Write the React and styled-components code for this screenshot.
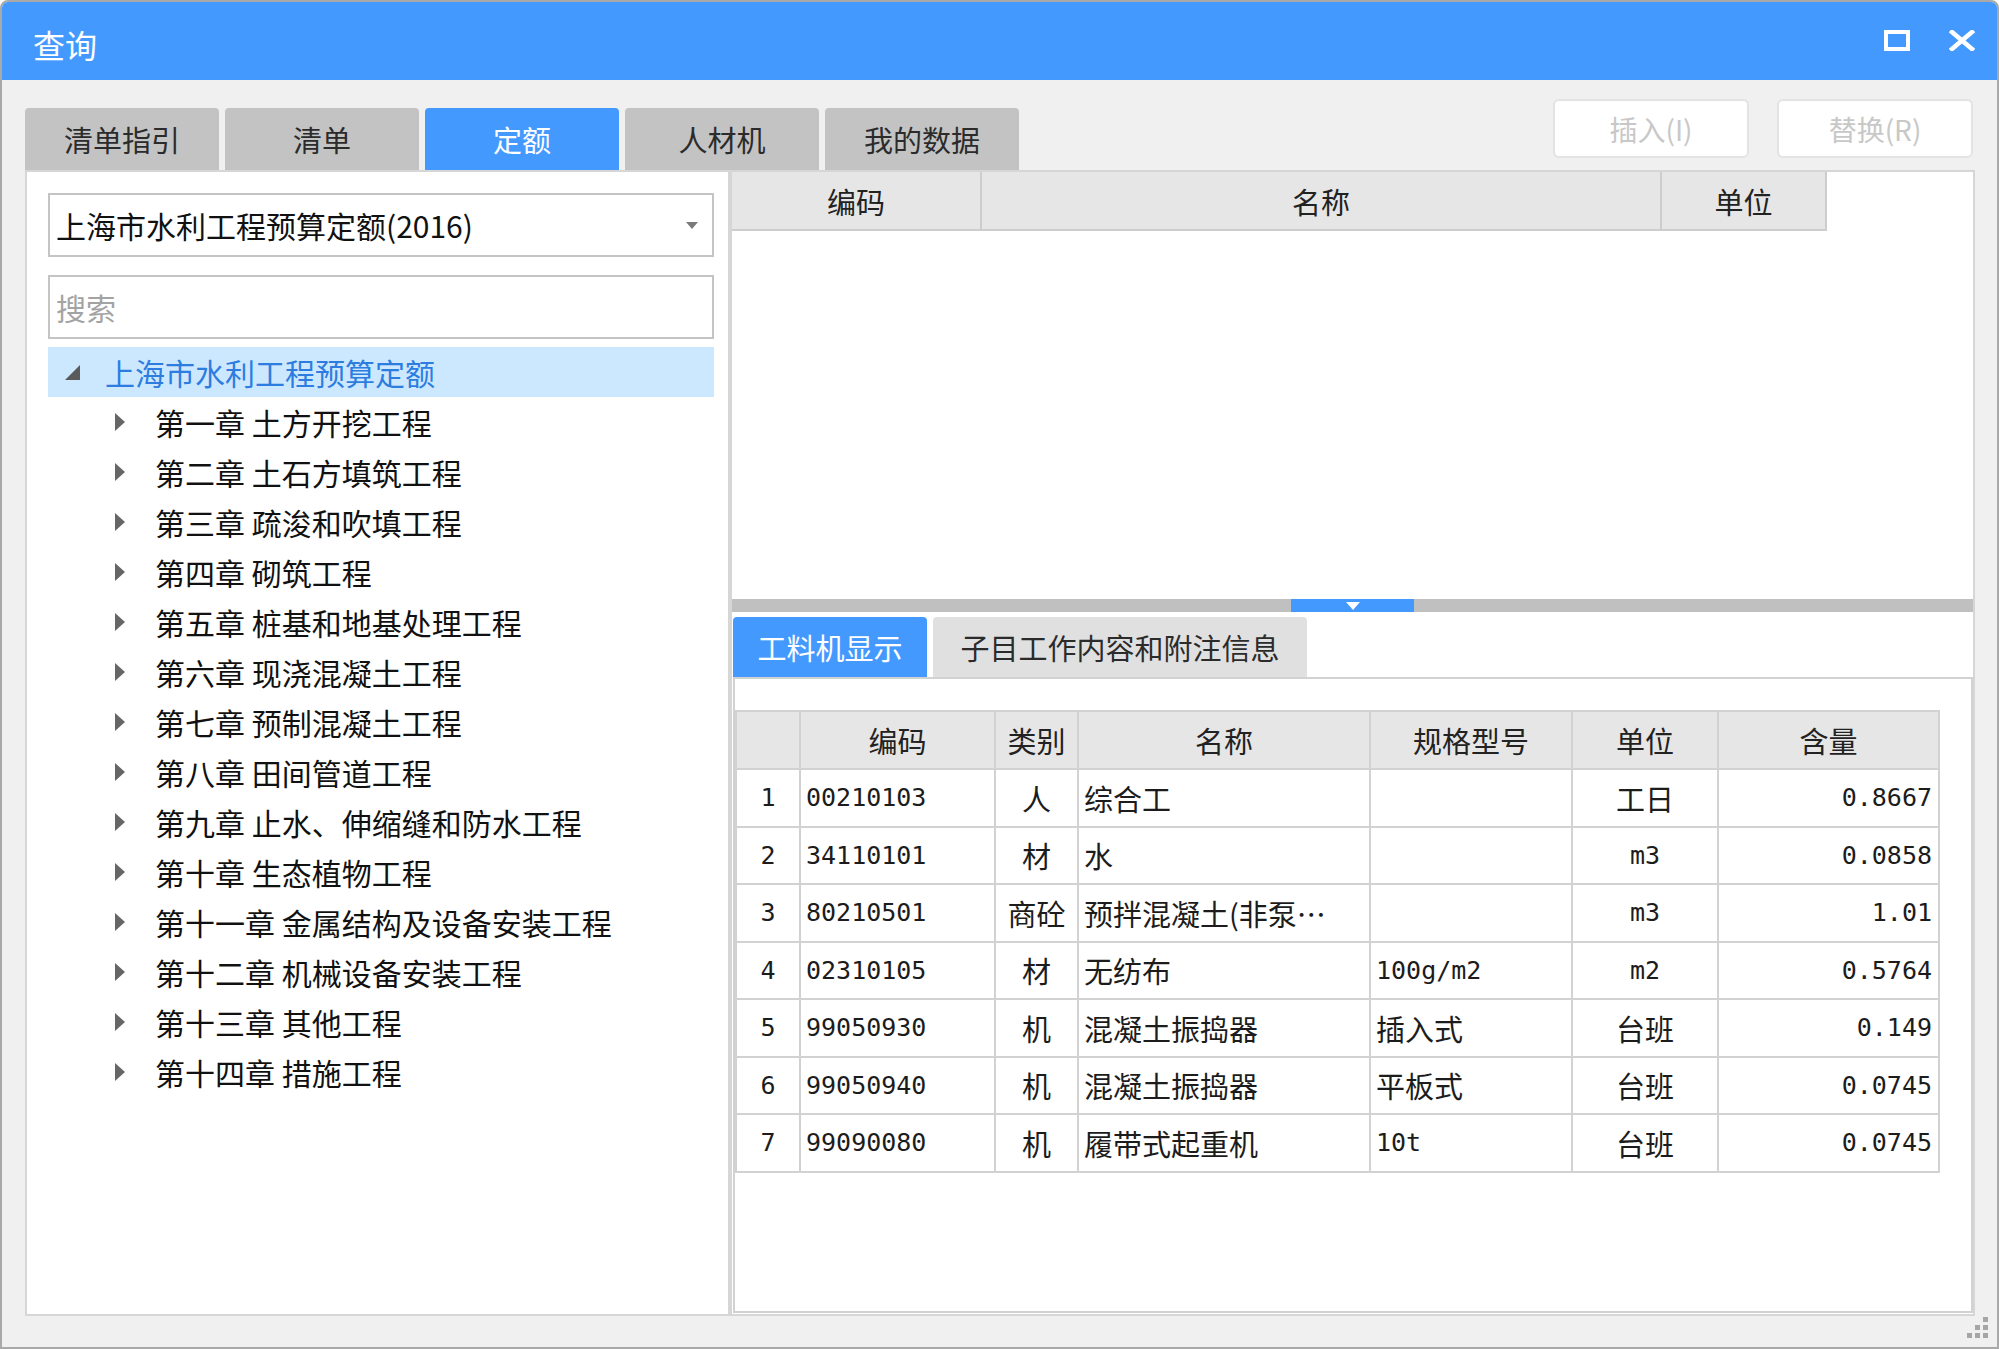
import React from 'react';
import styled, { createGlobalStyle } from 'styled-components';

const CJK = `"Noto Sans CJK SC", "Noto Sans", sans-serif`;
const MONO = `"DejaVu Sans Mono", "Liberation Mono", monospace`;
const BLUE = '#4499ff';

const GlobalStyle = createGlobalStyle`
  html, body { margin: 0; padding: 0; background: #ffffff; }
  body { font-family: ${CJK}; }
  *, *::before, *::after { box-sizing: border-box; }
`;

const Window = styled.div`
  position: relative;
  width: 1999px;
  height: 1349px;
  border: 2px solid #a9a9a9;
  border-radius: 8px 8px 0 0;
  background: #f0f0f0;
  overflow: hidden;
  display: flex;
  flex-direction: column;
`;

const TitleBar = styled.div`
  flex: none;
  height: 78px;
  background: ${BLUE};
  display: flex;
  align-items: center;
  justify-content: space-between;
  padding: 0 22px 0 31px;
`;

const Title = styled.div`
  margin-top: 5px;
  font-size: 32px;
  line-height: 1;
  color: #ffffff;
`;

const TitleButtons = styled.div`
  display: flex;
  align-items: center;
  gap: 39px;
  margin-top: -2px;
`;

const Body = styled.div`
  flex: 1;
  display: flex;
  flex-direction: column;
  padding: 0 22px 31px 23px;
  min-height: 0;
`;

const TopRow = styled.div`
  flex: none;
  height: 90px;
  display: flex;
  justify-content: space-between;
`;

const Tabs = styled.div`
  align-self: flex-end;
  display: flex;
  gap: 6px;
`;

const Tab = styled.div`
  width: 194px;
  height: 62px;
  border-radius: 4px 4px 0 0;
  background: ${(p) => (p.$active ? BLUE : '#c3c3c3')};
  color: ${(p) => (p.$active ? '#ffffff' : '#2b2b2b')};
  font-size: 29px;
  display: flex;
  align-items: center;
  justify-content: center;
`;

const Actions = styled.div`
  display: flex;
  gap: 28px;
  margin: 19px 2px 0 0;
  align-self: flex-start;
`;

const ActionButton = styled.div`
  width: 196px;
  height: 59px;
  background: #ffffff;
  border: 2px solid #e3e3e3;
  border-radius: 6px;
  color: #c8c8c8;
  font-size: 28px;
  display: flex;
  align-items: center;
  justify-content: center;
`;

const Content = styled.div`
  flex: 1;
  display: flex;
  min-height: 0;
`;

const LeftPanel = styled.div`
  flex: none;
  width: 705px;
  background: #ffffff;
  border: 2px solid #d6d6d6;
  padding: 21px 14px 0 21px;
  display: flex;
  flex-direction: column;
`;

const Select = styled.div`
  height: 64px;
  border: 2px solid #c4c4c4;
  display: flex;
  align-items: center;
  justify-content: space-between;
  padding: 0 14px 0 6px;
  font-size: 30px;
  color: #111111;
  background: #ffffff;
`;

const SearchInput = styled.input`
  margin-top: 18px;
  height: 64px;
  width: 100%;
  border: 2px solid #c4c4c4;
  padding: 0 6px;
  font-family: ${CJK};
  font-size: 30px;
  color: #111111;
  outline: none;
  &::placeholder { color: #a3a3a3; }
`;

const Tree = styled.div`
  margin-top: 8px;
  display: flex;
  flex-direction: column;
`;

const TreeRow = styled.div`
  height: 50px;
  display: flex;
  align-items: center;
  padding-left: ${(p) => 17 + p.$level * 50}px;
  background: ${(p) => (p.$selected ? '#cce8ff' : 'transparent')};
  color: ${(p) => (p.$selected ? '#2d7de0' : '#111111')};
  font-size: 30px;
  white-space: nowrap;
`;

const Toggle = styled.span`
  flex: none;
  width: 40px;
  display: flex;
  align-items: center;
`;

const RightPanel = styled.div`
  flex: 1;
  display: flex;
  flex-direction: column;
  background: #ffffff;
  border: 2px solid #d6d6d6;
  min-width: 0;
`;

const UpperArea = styled.div`
  flex: none;
  height: 427px;
`;

const HeaderRow = styled.div`
  display: flex;
`;

const HeadCell = styled.div`
  flex: none;
  width: ${(p) => p.$w}px;
  height: 59px;
  background: #e6e6e6;
  border-right: 2px solid #cdcdcd;
  border-bottom: 2px solid #cdcdcd;
  display: flex;
  align-items: center;
  justify-content: center;
  font-size: 29px;
  color: #222222;
`;

const Splitter = styled.div`
  flex: none;
  height: 13px;
  background: #c0c0c0;
  display: flex;
  justify-content: center;
`;

const SplitHandle = styled.div`
  width: 123px;
  height: 13px;
  background: ${BLUE};
  display: flex;
  align-items: center;
  justify-content: center;
`;

const SubTabs = styled.div`
  flex: none;
  display: flex;
  gap: 6px;
  padding: 5px 0 0 1px;
`;

const SubTab = styled.div`
  width: ${(p) => p.$w}px;
  height: 60px;
  border-radius: 4px 4px 0 0;
  background: ${(p) => (p.$active ? BLUE : '#e0e0e0')};
  color: ${(p) => (p.$active ? '#ffffff' : '#2b2b2b')};
  font-size: 29px;
  display: flex;
  align-items: center;
  justify-content: center;
`;

const LowerPanel = styled.div`
  flex: 1;
  margin: 0 0 1px 1px;
  border: 2px solid #d2d2d2;
  background: #ffffff;
  display: flex;
  flex-direction: column;
`;

const FilterBand = styled.div`
  flex: none;
  height: 31px;
`;

const DataGrid = styled.div`
  display: grid;
  grid-template-columns: 64px 195px 83px 292px 202px 146px 221px;
  grid-template-rows: 58px;
  grid-auto-rows: 57.5px;
  width: max-content;
  border-top: 2px solid #d2d2d2;
  border-left: 2px solid #d2d2d2;
`;

const GridHead = styled.div`
  background: #e6e6e6;
  border-right: 2px solid #d2d2d2;
  border-bottom: 2px solid #d2d2d2;
  display: flex;
  align-items: center;
  justify-content: center;
  font-size: 29px;
  color: #222222;
`;

const GridCell = styled.div`
  border-right: 2px solid #d2d2d2;
  border-bottom: 2px solid #d2d2d2;
  display: flex;
  align-items: center;
  justify-content: ${(p) => (p.$align === 'center' ? 'center' : p.$align === 'right' ? 'flex-end' : 'flex-start')};
  padding: ${(p) => (p.$align === 'right' ? '0 6px 0 0' : p.$align === 'center' ? '0' : '0 0 0 5px')};
  font-family: ${(p) => (p.$mono ? MONO : CJK)};
  font-size: ${(p) => (p.$mono ? '25px' : '29px')};
  color: #1c1c1c;
  white-space: nowrap;
  overflow: hidden;
`;

const Grip = styled.div`
  position: absolute;
  right: 8px;
  bottom: 8px;
  width: 22px;
  height: 22px;
`;

const MaxIcon = () => (
  <svg width="26" height="21" viewBox="0 0 26 21">
    <rect x="2" y="2" width="22" height="17" fill="none" stroke="#fff" strokeWidth="4" />
  </svg>
);

const CloseIcon = () => (
  <svg width="26" height="21" viewBox="0 0 26 21">
    <path d="M3 2 L23 19 M23 2 L3 19" stroke="#fff" strokeWidth="4.5" strokeLinecap="square" />
  </svg>
);

const DropArrow = () => (
  <svg width="12" height="7" viewBox="0 0 12 7">
    <polygon points="0,0 12,0 6,7" fill="#7a7a7a" />
  </svg>
);

const ExpandedIcon = () => (
  <svg width="15" height="15" viewBox="0 0 15 15">
    <polygon points="15,0 15,15 0,15" fill="#5a5a5a" />
  </svg>
);

const CollapsedIcon = () => (
  <svg width="10" height="18" viewBox="0 0 10 18">
    <polygon points="0,0 10,9 0,18" fill="#666666" />
  </svg>
);

const DownMark = () => (
  <svg width="14" height="8" viewBox="0 0 14 8">
    <polygon points="0,0 14,0 7,8" fill="#ffffff" />
  </svg>
);

const GripDots = () => (
  <svg width="22" height="22" viewBox="0 0 22 22">
    {[
      [16, 0],
      [8, 8], [16, 8],
      [0, 16], [8, 16], [16, 16],
    ].map(([x, y], i) => (
      <rect key={i} x={x} y={y} width="5" height="5" fill="#a6a6a6" />
    ))}
  </svg>
);

const mainTabs = ['清单指引', '清单', '定额', '人材机', '我的数据'];

const chapters = [
  '第一章 土方开挖工程',
  '第二章 土石方填筑工程',
  '第三章 疏浚和吹填工程',
  '第四章 砌筑工程',
  '第五章 桩基和地基处理工程',
  '第六章 现浇混凝土工程',
  '第七章 预制混凝土工程',
  '第八章 田间管道工程',
  '第九章 止水、伸缩缝和防水工程',
  '第十章 生态植物工程',
  '第十一章 金属结构及设备安装工程',
  '第十二章 机械设备安装工程',
  '第十三章 其他工程',
  '第十四章 措施工程',
];

const gridHeads = ['', '编码', '类别', '名称', '规格型号', '单位', '含量'];
const aligns = ['center', 'left', 'center', 'left', 'left', 'center', 'right'];

const rows = [
  ['1', '00210103', '人', '综合工', '', '工日', '0.8667'],
  ['2', '34110101', '材', '水', '', 'm3', '0.0858'],
  ['3', '80210501', '商砼', '预拌混凝土(非泵…', '', 'm3', '1.01'],
  ['4', '02310105', '材', '无纺布', '100g/m2', 'm2', '0.5764'],
  ['5', '99050930', '机', '混凝土振捣器', '插入式', '台班', '0.149'],
  ['6', '99050940', '机', '混凝土振捣器', '平板式', '台班', '0.0745'],
  ['7', '99090080', '机', '履带式起重机', '10t', '台班', '0.0745'],
];

const isAscii = (s) => /^[\x00-\x7f]*$/.test(s);

export default function App() {
  return (
    <>
      <GlobalStyle />
      <Window>
        <TitleBar>
          <Title>查询</Title>
          <TitleButtons>
            <MaxIcon />
            <CloseIcon />
          </TitleButtons>
        </TitleBar>
        <Body>
          <TopRow>
            <Tabs>
              {mainTabs.map((t) => (
                <Tab key={t} $active={t === '定额'}>{t}</Tab>
              ))}
            </Tabs>
            <Actions>
              <ActionButton>插入(I)</ActionButton>
              <ActionButton>替换(R)</ActionButton>
            </Actions>
          </TopRow>
          <Content>
            <LeftPanel>
              <Select>
                <span>上海市水利工程预算定额(2016)</span>
                <DropArrow />
              </Select>
              <SearchInput placeholder="搜索" />
              <Tree>
                <TreeRow $level={0} $selected>
                  <Toggle><ExpandedIcon /></Toggle>
                  上海市水利工程预算定额
                </TreeRow>
                {chapters.map((c) => (
                  <TreeRow key={c} $level={1}>
                    <Toggle><CollapsedIcon /></Toggle>
                    {c}
                  </TreeRow>
                ))}
              </Tree>
            </LeftPanel>
            <RightPanel>
              <UpperArea>
                <HeaderRow>
                  <HeadCell $w={250}>编码</HeadCell>
                  <HeadCell $w={680}>名称</HeadCell>
                  <HeadCell $w={165}>单位</HeadCell>
                </HeaderRow>
              </UpperArea>
              <Splitter>
                <SplitHandle><DownMark /></SplitHandle>
              </Splitter>
              <SubTabs>
                <SubTab $w={194} $active>工料机显示</SubTab>
                <SubTab $w={374}>子目工作内容和附注信息</SubTab>
              </SubTabs>
              <LowerPanel>
                <FilterBand />
                <DataGrid>
                  {gridHeads.map((h, i) => (
                    <GridHead key={'h' + i}>{h}</GridHead>
                  ))}
                  {rows.map((r) =>
                    r.map((v, i) => (
                      <GridCell key={r[0] + '-' + i} $align={aligns[i]} $mono={isAscii(v)}>
                        {v}
                      </GridCell>
                    ))
                  )}
                </DataGrid>
              </LowerPanel>
            </RightPanel>
          </Content>
        </Body>
        <Grip><GripDots /></Grip>
      </Window>
    </>
  );
}
